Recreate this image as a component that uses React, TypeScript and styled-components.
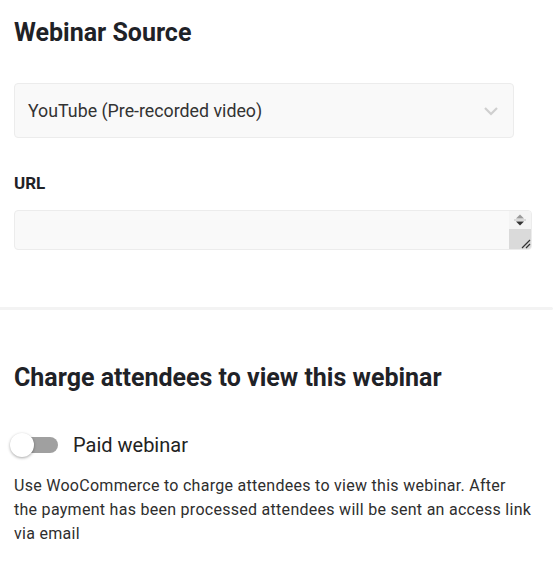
import React, { useState } from 'react';
import styled, { createGlobalStyle } from 'styled-components';

const GlobalStyle = createGlobalStyle`
  html, body {
    margin: 0;
    padding: 0;
    background: #fff;
  }
  body {
    font-family: Roboto, 'Liberation Sans', sans-serif;
    color: #222;
  }
  * {
    box-sizing: border-box;
  }
`;

const Page = styled.div`
  width: 556px;
  display: flex;
  flex-direction: column;
`;

const Section = styled.section<{ $pad: string }>`
  padding: ${(p) => p.$pad};
  display: flex;
  flex-direction: column;
`;

const Divider = styled.hr`
  margin: 0;
  border: none;
  height: 3px;
  background: #f3f3f3;
  border-radius: 0 2px 2px 0;
  width: 553px;
`;

const Heading = styled.h2`
  margin: 0;
  font-size: 25px;
  line-height: 30px;
  font-weight: 700;
  color: #1f2227;
`;

const Label = styled.label`
  display: block;
  font-size: 17px;
  line-height: 20px;
  font-weight: 700;
  color: #1f2227;
`;

const SelectBox = styled.div`
  width: 500px;
  height: 55px;
  border: 1px solid #ececec;
  border-radius: 4px;
  background: #f9f9f9;
  display: flex;
  align-items: center;
  justify-content: space-between;
  padding: 0 14px 0 13px;
  font-size: 17.8px;
  color: #333;
`;

const Chevron = styled.svg`
  width: 16px;
  height: 10px;
  color: #cfcfcf;
`;

const UrlField = styled.div`
  width: 518px;
  height: 40px;
  border: 1px solid #ececec;
  border-radius: 4px;
  background: #f9f9f9;
  display: flex;
  justify-content: flex-end;
  overflow: hidden;
`;

const Spinner = styled.div`
  width: 22px;
  display: flex;
  flex-direction: column;
`;

const SpinTop = styled.div`
  height: 18px;
  display: flex;
  align-items: center;
  justify-content: center;
  background: #f4f4f4;
`;

const SpinBottom = styled.div`
  flex: 1;
  background: #dadada;
  display: flex;
  align-items: flex-end;
  justify-content: flex-end;
`;

const ToggleRow = styled.div`
  display: flex;
  align-items: center;
  gap: 15px;
  margin-left: -4px;
`;

const Track = styled.button<{ $on: boolean }>`
  position: relative;
  width: 48px;
  height: 24px;
  padding: 0;
  border: none;
  background: transparent;
  cursor: pointer;
  &::before {
    content: '';
    position: absolute;
    left: 8px;
    right: 0;
    top: 4px;
    height: 16px;
    border-radius: 8px;
    background: ${(p) => (p.$on ? '#7fb0e0' : '#a0a0a0')};
  }
`;

const Knob = styled.span<{ $on: boolean }>`
  position: absolute;
  top: 0;
  left: ${(p) => (p.$on ? '24px' : '0')};
  width: 24px;
  height: 24px;
  border-radius: 50%;
  background: #fff;
  box-shadow: 0 1px 3px rgba(0, 0, 0, 0.35);
`;

const ToggleLabel = styled.span`
  font-size: 20px;
  color: #222;
`;

const Help = styled.p`
  margin: 0;
  max-width: 524px;
  font-size: 16px;
  letter-spacing: 0.28px;
  line-height: 24px;
  color: #2e2e2e;
`;

export default function App() {
  const [paid, setPaid] = useState(false);
  return (
    <Page>
      <GlobalStyle />
      <Section $pad="18px 0 0 14px">
        <Heading>Webinar Source</Heading>
        <div style={{ height: 35 }} />
        <SelectBox>
          <span>YouTube (Pre-recorded video)</span>
          <Chevron viewBox="0 0 16 10" fill="none">
            <path d="M2 2l6 6 6-6" stroke="currentColor" strokeWidth="2.2" />
          </Chevron>
        </SelectBox>
        <div style={{ height: 35 }} />
        <Label>URL</Label>
        <div style={{ height: 17 }} />
        <UrlField>
          <Spinner>
            <SpinTop>
              <svg width="12" height="14" viewBox="0 0 12 14">
                <path d="M2 5.5L6 1.5 10 5.5z" fill="#9a9a9a" />
                <rect x="0" y="6.5" width="12" height="1" fill="#bdbdbd" />
                <path d="M2 8.5L6 12.5 10 8.5z" fill="#333" />
              </svg>
            </SpinTop>
            <SpinBottom>
              <svg width="12" height="12" viewBox="0 0 12 12">
                <path d="M3 11L11 3M7 11L11 7" stroke="#333" strokeWidth="1.2" />
              </svg>
            </SpinBottom>
          </Spinner>
        </UrlField>
      </Section>
      <div style={{ height: 57 }} />
      <Divider />
      <Section $pad="53px 0 30px 14px">
        <Heading>Charge attendees to view this webinar</Heading>
        <div style={{ height: 40 }} />
        <ToggleRow>
          <Track $on={paid} onClick={() => setPaid(!paid)} aria-label="Paid webinar">
            <Knob $on={paid} />
          </Track>
          <ToggleLabel>Paid webinar</ToggleLabel>
        </ToggleRow>
        <div style={{ height: 17 }} />
        <Help>
          Use WooCommerce to charge attendees to view this webinar. After
          <br />
          the payment has been processed attendees will be sent an access link via email
        </Help>
      </Section>
    </Page>
  );
}
